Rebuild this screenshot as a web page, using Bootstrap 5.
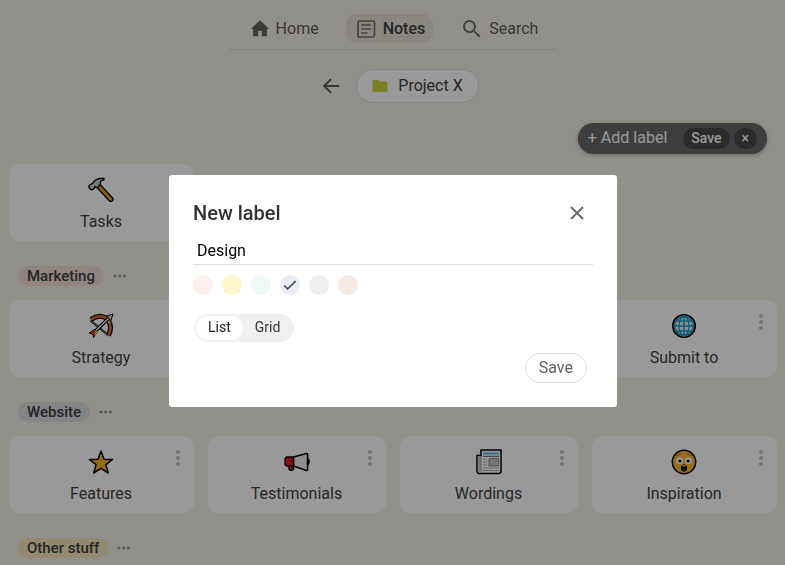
<!DOCTYPE html>
<html lang="en">
<head>
<meta charset="utf-8">
<meta name="viewport" content="width=device-width, initial-scale=1">
<title>Project X – Notes</title>
<link href="https://cdn.jsdelivr.net/npm/bootstrap@5.3.0/dist/css/bootstrap.min.css" rel="stylesheet">
<style>
  body { font-family: Roboto, "Noto Sans", sans-serif; font-size: 16px; line-height: 24px; color: #404040; background: #f4f1e8; overflow: hidden; }
  svg { display: block; flex: none; }
  button { font-family: inherit; }
  .page { padding: 14px 8px 0 9px; }
  .top-nav { gap: 19px; padding: 0 11px 6px 12px; border-bottom: 1px solid #dcdad6; }
  .top-nav a { display: flex; align-items: center; gap: 5px; height: 29px; padding: 0 8px; border-radius: 10px; color: #5c5b58; text-decoration: none; }
  .top-nav a.active { background: #e6dfd5; color: #404040; font-weight: 500; }
  .crumbs { margin-top: 19px; padding-left: 13px; gap: 14px; }
  .icon-btn { border: 0; padding: 0; background: none; color: #5c5b58; }
  .project { display: flex; align-items: center; gap: 9px; height: 34px; padding: 0 15px 0 14px; border: 1px solid #dcdde0; border-radius: 17px; background: #fff; color: #404040; }
  .add-bar { margin: 20px 10px 10px 0; height: 31px; padding: 0 10px; border-radius: 16px; background: #686868; color: #fff; box-shadow: 0 1px 4px rgba(0,0,0,.3); }
  .add-bar button { border: 0; background: none; color: #fff; padding: 0; line-height: 21px; }
  .add-bar .add-text { padding-bottom: 2px; }
  .add-bar .dark-pill { height: 21px; border-radius: 11px; background: #484848; padding: 0 8px; font-size: 14px; font-weight: 500; }
  .add-bar .dark-pill + .dark-pill { margin-left: 4px; }
  .tiles { --bs-gutter-x: 14px; margin: 0; }
  .tiles > * { padding: 0 7px; }
  .tiles > .first { padding-left: 0; }
  .tiles > .last { padding-right: 0; }
  .tile { position: relative; height: 77px; padding: 13px 1px 0 0; border-radius: 10px; background: #fff; text-align: center; }
  .tile a { display: flex; flex-direction: column; align-items: center; gap: 7px; color: #404040; text-decoration: none; }
  .tile .kebab { position: absolute; right: 13px; top: 13px; color: #c4c4c4; }
  .group-head { gap: 9px; padding: 25px 0 14px 9px; }
  .group-head .icon-btn { color: #94938f; }
  .tag { height: 20px; line-height: 20px; padding: 0 9px; border-radius: 10px; font-size: 15px; font-weight: 500; }
  .tag-pink { background: #f1dcd7; }
  .tag-blue { background: #dcdce2; }
  .tag-yellow { background: #f3e6b8; }
  .shade { background: rgba(0,0,0,.4); padding: 0 0 0 1px; }
  .shade .modal-dialog { max-width: 448px; margin-top: 175px; }
  .shade .modal-content { border: 0; border-radius: 3px; padding: 24px; color: #333; }
  .shade h1 { font-size: 20px; line-height: 28px; font-weight: 500; }
  .name-field { width: 100%; height: 29px; margin-top: 9px; padding: 0 4px; border: 0; border-bottom: 1px solid #dcdcdc; outline: 0; color: #000; background: none; }
  .swatches { gap: 9px; margin-top: 10px; }
  .swatches input { appearance: none; width: 20px; height: 20px; margin: 0; border-radius: 50%; }
  .swatches label { display: grid; }
  .swatches label > * { grid-area: 1 / 1; pointer-events: none; }
  .c-pink { background: #ffeeee; } .c-yellow { background: #fff5c8; } .c-mint { background: #eefaf5; }
  .c-blue { background: #eaedf7; } .c-gray { background: #efefef; } .c-tan { background: #f4eae4; }
  .view-toggle { width: fit-content; margin: 19px 0 0 1px; padding: 2px; border-radius: 14px; background: #f0f0f0; font-size: 14px; }
  .view-toggle label { height: 24px; padding: 0 12px; border-radius: 12px; line-height: 23px; }
  .view-toggle input:checked + label { background: #fff; color: #222; }
  .save-btn { height: 30px; padding: 0 13px; margin: 11px 6px 0 0; border: 1px solid #dcdcdc; border-radius: 15px; background: #fff; color: #606060; line-height: 28px; }
</style>
<script src="https://cdn.jsdelivr.net/npm/bootstrap@5.3.0/dist/js/bootstrap.bundle.min.js"></script>
</head>
<body>
<svg class="d-none" aria-hidden="true">
  <symbol id="kebab" viewBox="0 0 6 18"><g fill="currentColor"><circle cx="3" cy="3" r="2"/><circle cx="3" cy="9" r="2"/><circle cx="3" cy="15" r="2"/></g></symbol>
  <symbol id="dots" viewBox="0 0 14 4"><g fill="currentColor"><circle cx="2" cy="2" r="1.6"/><circle cx="6.700" cy="2" r="1.6"/><circle cx="11.400" cy="2" r="1.6"/></g></symbol>
</svg>

<div class="page">
  <header class="d-flex justify-content-center">
    <nav class="top-nav d-flex" aria-label="Main">
      <a href="#"><svg width="22" height="22" viewBox="0 0 24 24" fill="#646361"><path d="M10 20v-6h4v6h5.500v-8H22L12 2.500 2 12h2.500v8z"/></svg>Home</a>
      <a href="#" class="active" aria-current="page"><svg width="24" height="24" viewBox="0 0 24 24" fill="none" stroke="#716f6c" stroke-width="1.700"><rect x="4" y="4" width="16.500" height="16" rx="1.500"/><path d="M7 8h10M7 12h10M7 16h6.500"/></svg>Notes</a>
      <a href="#"><svg width="24" height="24" viewBox="0 0 24 24" fill="#716f6c"><path d="M15.500 14h-.79l-.28-.27A6.470 6.470 0 0 0 16 9.500 6.500 6.500 0 1 0 9.500 16c1.610 0 3.090-.59 4.230-1.570l.27.28v.79l5 4.990L20.490 19l-4.990-5zm-6 0C7.010 14 5 11.990 5 9.500S7.010 5 9.500 5 14 7.010 14 9.500 11.990 14 9.500 14z"/></svg>Search</a>
    </nav>
  </header>

  <div class="crumbs d-flex justify-content-center align-items-center">
    <button class="icon-btn" aria-label="Back"><svg width="22" height="22" viewBox="0 0 24 24" fill="none" stroke="currentColor" stroke-width="2.100"><path d="M21 12H5M12 4.500L4.500 12l7.500 7.500"/></svg></button>
    <button class="project"><svg width="18" height="18" viewBox="0 0 24 24" fill="#ced63f"><path d="M10 4H4a2 2 0 0 0-2 2v12c0 1.100.9 2 2 2h16a2 2 0 0 0 2-2V8a2 2 0 0 0-2-2h-8z"/></svg>Project X</button>
  </div>

  <div class="d-flex justify-content-end">
    <div class="add-bar d-flex align-items-center">
      <button class="add-text me-3">+ Add label</button>
      <button class="dark-pill">Save</button>
      <button class="dark-pill" aria-label="Close">×</button>
    </div>
  </div>

  <main>
    <div class="row tiles">
      <div class="col-3 first"><div class="tile">
        <a href="#"><svg width="26" height="26" viewBox="0 0 26 26" stroke="#000" stroke-width="1.300" stroke-linejoin="round"><path d="M9 10.500l3-3L25 21.500c.8 1.500-1.500 3.500-3.200 2.700z" fill="#f2a313"/><path d="M1 10.500c-.4-1 .3-2.500 1.500-3L5 6c1.500-3 5.500-5 11-4.500l-.3 1.500c-3 .3-3.700 1.500-3.200 4L9.500 11 7 9.500c-.5 2-2 3.300-4 3.300z" fill="#c9c9c9"/></svg>Tasks</a>
        <button class="kebab icon-btn" aria-label="Tasks menu"><svg width="6" height="18"><use href="#kebab"/></svg></button>
      </div></div>
    </div>

    <div class="group-head d-flex align-items-center"><span class="tag tag-pink">Marketing</span><button class="icon-btn" aria-label="Marketing options"><svg width="14" height="4"><use href="#dots"/></svg></button></div>
    <div class="row tiles">
      <div class="col-3 first"><div class="tile">
        <a href="#"><svg width="26" height="26" viewBox="0 0 26 26" fill="none" stroke-linejoin="round"><path d="M2.500 7.500L20 22" stroke="#000" stroke-width="2.200"/><path d="M2.500 7.500L20 22" stroke="#ddd" stroke-width=".7"/><path d="M3 6.500C10 1.500 17 3 20 7s3.500 9 .5 15.500" stroke="#000" stroke-width="5"/><path d="M3 6.500C10 1.500 17 3 20 7s3.500 9 .5 15.500" stroke="#dc692c" stroke-width="2.600"/><path d="M18 5.200c2 1.300 3 2.800 3.700 5" stroke="#f5b52a" stroke-width="2.600"/><path d="M6 19.500L22 4" stroke="#000" stroke-width="3.600"/><path d="M6 19.500L22 4" stroke="#e8e8e8" stroke-width="1.500"/><path d="M18.500 3L25 1l-2 6.500z" fill="#ccc" stroke="#000"/><path d="M1 20l6-3.500 2 2.500-3.500 5.500-.5-3.300z" fill="#e8332c" stroke="#000"/><path d="M7 17.500l1.500 1.500-2 3" stroke="#f8b62c" stroke-width="1.500"/></svg>Strategy</a>
      </div></div>
      <div class="col-3 offset-6 last"><div class="tile">
        <a href="#"><svg width="26" height="26" viewBox="0 0 26 26" fill="none"><circle cx="13" cy="13" r="11.200" fill="#e8eef0" stroke="#000" stroke-width="1.600"/><g stroke="#1e9cc8" stroke-width="1.400"><circle cx="13" cy="13" r="9.500" stroke-width="1.800"/><ellipse cx="13" cy="13" rx="5" ry="9.500"/><path d="M13 3v20M3 13h20M5 8h16M5 18h16"/></g></svg>Submit to</a>
        <button class="kebab icon-btn" aria-label="Submit to menu"><svg width="6" height="18"><use href="#kebab"/></svg></button>
      </div></div>
    </div>

    <div class="group-head d-flex align-items-center"><span class="tag tag-blue">Website</span><button class="icon-btn" aria-label="Website options"><svg width="14" height="4"><use href="#dots"/></svg></button></div>
    <div class="row tiles">
      <div class="col-3 first"><div class="tile">
        <a href="#"><svg width="26" height="26" viewBox="0 0 26 26"><path d="M13 2l3 8.200 8.500.3-6.600 5.200L20.300 24 13 19.300 5.700 24l2.400-8.300-6.600-5.200 8.500-.3z" fill="#f5b52a" stroke="#000" stroke-width="1.500" stroke-linejoin="round"/></svg>Features</a>
        <button class="kebab icon-btn" aria-label="Features menu"><svg width="6" height="18"><use href="#kebab"/></svg></button>
      </div></div>
      <div class="col-3"><div class="tile">
        <a href="#"><svg width="26" height="26" viewBox="0 0 26 26" stroke="#000" stroke-width="1.400" stroke-linejoin="round"><path d="M5 16v4.300c1.200 1.200 3.200 1.200 4.500 0V16z" fill="#e8172a"/><path d="M24 10v5c1.500-.5 1.500-4.500 0-5z" fill="#ccc"/><path d="M9.500 8L22.500 4.500l1.200.5v16l-1.200.5L9.500 17z" fill="#eee"/><path d="M9.500 8H2.500L1 10v5.500L2.500 17h7z" fill="#e8172a"/><path d="M22.500 5v16" stroke="#999" stroke-width=".7"/></svg>Testimonials</a>
        <button class="kebab icon-btn" aria-label="Testimonials menu"><svg width="6" height="18"><use href="#kebab"/></svg></button>
      </div></div>
      <div class="col-3"><div class="tile">
        <a href="#"><svg width="26" height="26" viewBox="0 0 26 26" fill="none"><path d="M5 1h20v22l-1.500 1.500H2.500L1 23V6.500h4z" fill="#fff" stroke="#000" stroke-width="1.500"/><path d="M1.800 7.500H4.500V23L3 23.800 1.800 22.500z" fill="#c8c8c8"/><path d="M5 7v15.500" stroke="#888"/><path d="M7 4.500h16" stroke="#42b7e0" stroke-width="2"/><path d="M7 7.300h16" stroke="#555"/><path d="M7 10h4M7 13h4M7 16h4M7 19h16M7 21.500h16" stroke="#aaa"/><path d="M13 9.500h9.500V17H13z" fill="#c4c4c4" stroke="#888"/></svg>Wordings</a>
        <button class="kebab icon-btn" aria-label="Wordings menu"><svg width="6" height="18"><use href="#kebab"/></svg></button>
      </div></div>
      <div class="col-3 last"><div class="tile">
        <a href="#"><svg width="26" height="26" viewBox="0 0 26 26" fill="none"><circle cx="13" cy="13" r="11.700" fill="#f5b52a" stroke="#000" stroke-width="1.500"/><circle cx="8.700" cy="11.700" r="3.500" fill="#fff"/><circle cx="17.300" cy="11.700" r="3.500" fill="#fff"/><circle cx="8.900" cy="12" r="1.600" fill="#000"/><circle cx="17.100" cy="12" r="1.600" fill="#000"/><path d="M5 7.300c1-1.600 2.500-2.300 5-2.500M21 7.300c-1-1.600-2.500-2.300-5-2.500" stroke="#cf7a15" stroke-width="1.200"/><ellipse cx="13" cy="19" rx="3" ry="3.500" fill="#000"/><path d="M11.300 16.800h3.400" stroke="#fff"/><path d="M11.500 21.300c1-1 2-1 3 0" stroke="#d33"/></svg>Inspiration</a>
        <button class="kebab icon-btn" aria-label="Inspiration menu"><svg width="6" height="18"><use href="#kebab"/></svg></button>
      </div></div>
    </div>

    <div class="group-head d-flex align-items-center"><span class="tag tag-yellow">Other stuff</span><button class="icon-btn" aria-label="Other stuff options"><svg width="14" height="4"><use href="#dots"/></svg></button></div>
  </main>
</div>

<div class="modal shade d-block" role="dialog" aria-modal="true" aria-labelledby="dialog-title">
  <div class="modal-dialog">
    <form class="modal-content">
      <div class="d-flex justify-content-between align-items-center">
        <h1 id="dialog-title" class="mb-0">New label</h1>
        <button type="button" class="icon-btn me-1" aria-label="Close"><svg width="24" height="24" viewBox="0 0 24 24" fill="none" stroke="#666" stroke-width="1.800"><path d="M6 6l12 12M18 6L6 18"/></svg></button>
      </div>
      <input class="name-field" type="text" value="Design" aria-label="Label name">
      <div class="swatches d-flex" role="radiogroup" aria-label="Colour">
        <input class="c-pink" type="radio" name="colour" aria-label="Pink">
        <input class="c-yellow" type="radio" name="colour" aria-label="Yellow">
        <input class="c-mint" type="radio" name="colour" aria-label="Mint">
        <label><input class="c-blue" type="radio" name="colour" aria-label="Blue" checked><svg width="20" height="20" viewBox="0 0 20 20" fill="none" stroke="#4c4e54" stroke-width="1.600"><path d="M4.300 10.500l3.300 3.300 8.100-7.600"/></svg></label>
        <input class="c-gray" type="radio" name="colour" aria-label="Gray">
        <input class="c-tan" type="radio" name="colour" aria-label="Tan">
      </div>
      <div class="view-toggle d-flex" role="radiogroup" aria-label="View">
        <input class="btn-check" type="radio" name="view" id="view-list" checked><label for="view-list">List</label>
        <input class="btn-check" type="radio" name="view" id="view-grid"><label for="view-grid">Grid</label>
      </div>
      <div class="d-flex justify-content-end"><button type="button" class="save-btn">Save</button></div>
    </form>
  </div>
</div>
</body>
</html>
